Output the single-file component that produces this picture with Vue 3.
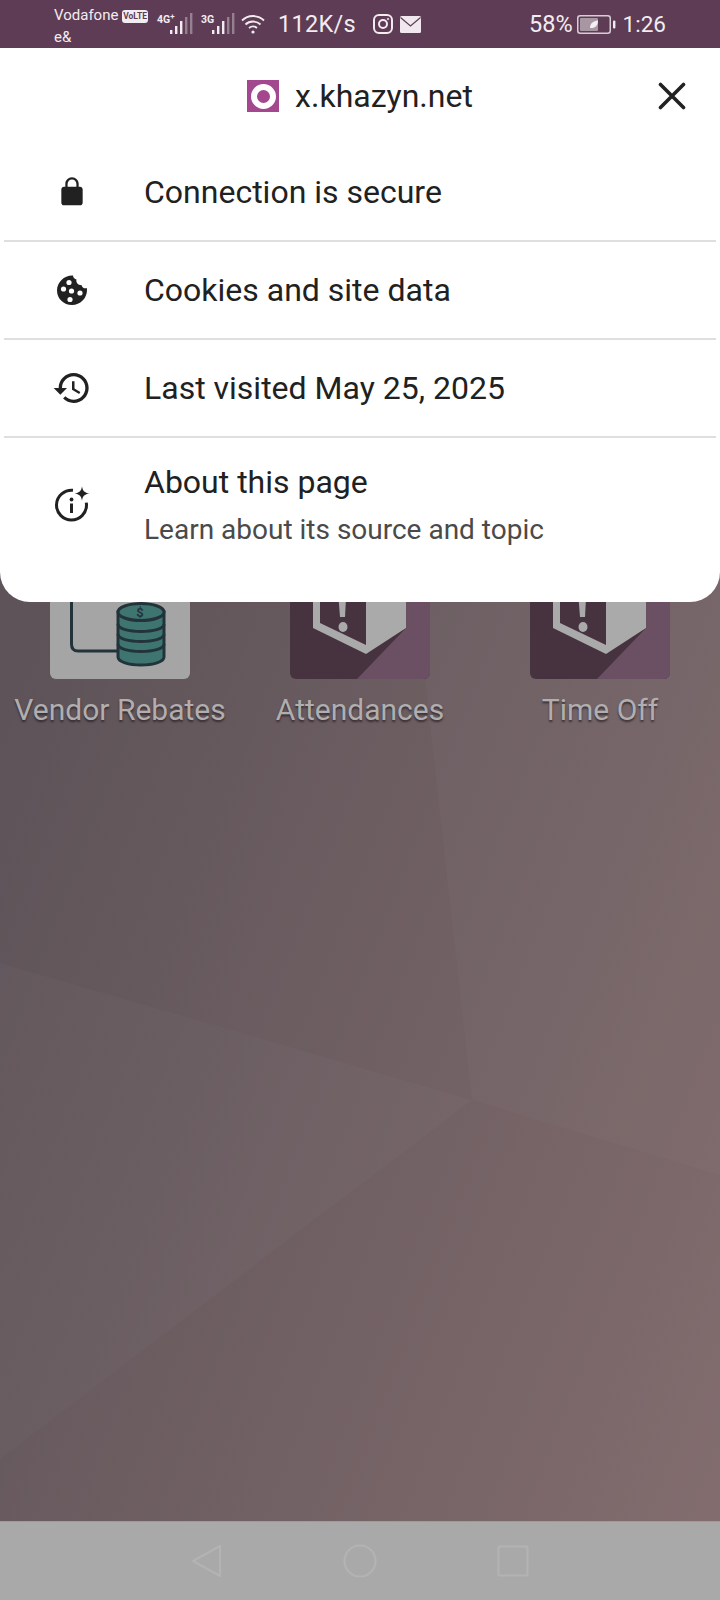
<template>
  <div class="phone">
    <!-- status bar -->
    <div class="status-bar">
      <div class="carrier">
        <div class="carrier-line">Vodafone <span class="volte">VoLTE</span></div>
        <div class="carrier-line">e&amp;</div>
      </div>
      <div class="net">
        <span class="net-label">4G<sup>+</sup></span>
        <svg class="bars" width="24" height="22" viewBox="0 0 24 22">
          <rect v-for="b in signalBars" :key="b.x" :x="b.x" :y="22 - b.h" width="2.4" :height="b.h" :fill="b.on ? '#f2ecf0' : '#94808f'" />
        </svg>
      </div>
      <div class="net net-3g">
        <span class="net-label">3G</span>
        <svg class="bars" width="24" height="22" viewBox="0 0 24 22">
          <rect v-for="b in signalBars" :key="b.x" :x="b.x" :y="22 - b.h" width="2.4" :height="b.h" :fill="b.on ? '#f2ecf0' : '#94808f'" />
        </svg>
      </div>
      <svg class="wifi" width="25" height="22" viewBox="0 0 25 22" fill="none" stroke="#f2ecf0" stroke-width="1.8">
        <path d="M1 7.500C7 1.500 17 1.500 23 7.500" />
        <path d="M4.500 11.500C8.500 7.500 15.500 7.500 19.500 11.500" />
        <path d="M8 15C10.500 13 13.500 13 16 15" />
        <circle cx="12" cy="19" r="1.600" fill="#f2ecf0" stroke="none" />
      </svg>
      <span class="speed">112K/s</span>
      <svg class="insta" width="20" height="20" viewBox="0 0 20 20" fill="none" stroke="#f2ecf0" stroke-width="2">
        <rect x="1" y="1" width="18" height="18" rx="5" />
        <circle cx="10" cy="10" r="4" />
        <circle cx="15" cy="5" r="0.800" fill="#f2ecf0" stroke-width="0.600" />
      </svg>
      <svg class="mail" width="21" height="17" viewBox="0 0 21 17">
        <rect width="21" height="17" rx="1.500" fill="#f0e8ee" />
        <path d="M0.500 1.500L10.500 10L20.500 1.500" fill="none" stroke="#5f3c55" stroke-width="1.200" />
      </svg>
      <div class="status-right">
        <span class="pct">58%</span>
        <svg class="battery" width="39" height="19" viewBox="0 0 39 19">
          <rect x="0.750" y="0.750" width="32.500" height="17.500" rx="2.500" fill="none" stroke="#d8ccd5" stroke-width="1.500" />
          <rect x="3" y="3" width="18" height="13" rx="1" fill="#a896a3" />
          <path d="M13 13C13 8.500 16 6 21 5.500C21 10.500 18 13.500 13 13Z" fill="#f4eff3" />
          <rect x="36" y="5.500" width="2.400" height="8" rx="1" fill="#f2ecf0" />
        </svg>
        <span class="clock">1:26</span>
      </div>
    </div>

    <!-- home screen behind the sheet -->
    <div class="home">
      <svg class="wallpaper" width="720" height="1473" viewBox="0 0 720 1473">
        <defs>
          <linearGradient id="wall" gradientUnits="userSpaceOnUse" x1="0" y1="672" x2="895" y2="1017">
            <stop offset="0" stop-color="#5d5358" />
            <stop offset="1" stop-color="#826c6e" />
          </linearGradient>
        </defs>
        <rect width="720" height="1473" fill="url(#wall)" />
        <path d="M410 500L472 1052L720 1127V500Z" fill="#fff" opacity="0.02" />
        <path d="M0 915L215 977L472 1052L0 1411Z" fill="#fff" opacity="0.018" />
      </svg>
      <div class="apps">
        <div v-for="app in apps" :key="app.name" class="app">
          <div class="tile" :class="app.kind">
            <svg v-if="app.kind === 'vendor'" width="140" height="140" viewBox="0 0 140 140">
              <path d="M21.500 40V105Q21.500 112 28 112H72" fill="none" stroke="#22343a" stroke-width="3" />
              <path d="M68 73V118C68 123 79 126 91 126C103 126 114 123 114 118V73Z" fill="#3f7570" stroke="#22343a" stroke-width="3" />
              <ellipse cx="91" cy="73" rx="23" ry="8.500" fill="#3f7570" stroke="#22343a" stroke-width="3" />
              <path d="M68 85C68 95 114 95 114 85" fill="none" stroke="#22343a" stroke-width="3" />
              <path d="M68 95C68 105 114 105 114 95" fill="none" stroke="#22343a" stroke-width="3" />
              <path d="M68 105C68 115 114 115 114 105" fill="none" stroke="#22343a" stroke-width="3" />
              <text x="90" y="78" text-anchor="middle" class="dollar">$</text>
            </svg>
            <svg v-else width="140" height="140" viewBox="0 0 140 140">
              <path d="M67 140H140V40H116V89Z" fill="#6a5062" />
              <path d="M23 40H116V89L76 115L23 89Z" fill="#aaaaaa" />
              <path d="M30 40H76V106L30 84Z" fill="#47333f" />
              <path d="M47 40H57L55 78H50Z" fill="#aaaaaa" />
              <ellipse cx="53" cy="88" rx="4.500" ry="5" fill="#aaaaaa" />
            </svg>
          </div>
          <span class="app-name">{{ app.name }}</span>
        </div>
      </div>
    </div>

    <div class="nav-bar">
      <svg width="32" height="34" viewBox="0 0 32 34" fill="none" stroke="#b3b3b3" stroke-width="2.200">
        <path d="M29 2V32L2 17Z" stroke-linejoin="round" />
      </svg>
      <svg width="34" height="34" viewBox="0 0 34 34" fill="none" stroke="#b3b3b3" stroke-width="2.200">
        <circle cx="17" cy="17" r="15.500" />
      </svg>
      <svg width="32" height="32" viewBox="0 0 32 32" fill="none" stroke="#b3b3b3" stroke-width="2.200">
        <rect x="1.500" y="1.500" width="29" height="29" rx="1" />
      </svg>
    </div>

    <!-- page info sheet -->
    <div class="sheet">
      <div class="sheet-head">
        <span class="favicon"><span class="favicon-ring"></span></span>
        <span class="site">x.khazyn.net</span>
        <svg class="close" width="28" height="28" viewBox="0 0 28 28" stroke="#222" stroke-width="3.600" stroke-linecap="round">
          <path d="M2.500 2.500L25.500 25.500M25.500 2.500L2.500 25.500" />
        </svg>
      </div>

      <div class="row">
        <span class="row-icon">
          <svg width="32" height="32" viewBox="0 0 24 24" fill="#212121">
            <path d="M18 8h-1V6c0-2.760-2.240-5-5-5S7 3.240 7 6v2H6c-1.100 0-2 .9-2 2v10c0 1.100.9 2 2 2h12c1.100 0 2-.9 2-2V10c0-1.100-.9-2-2-2zM8.700 6c0-1.820 1.480-3.300 3.300-3.300s3.300 1.480 3.300 3.300v2H8.700V6z" />
          </svg>
        </span>
        <span class="row-text">Connection is secure</span>
      </div>
      <div class="row">
        <span class="row-icon">
          <svg width="32" height="32" viewBox="0 0 32 32">
            <path d="M17 1.500C8.500 1 1 8 1 16.500C1 24.800 7.700 31 16 31C24.300 31 31 24.300 31 16C31 15.300 30.900 14.700 30.800 14C28.500 15 26 13.500 25.700 11.200C22.500 11.500 19.500 8.500 20.500 5.500C18.500 5 17 3.500 17 1.500Z" fill="#212121" />
            <circle cx="7.500" cy="15" r="2.600" fill="#fff" />
            <circle cx="13" cy="8.500" r="2.600" fill="#fff" />
            <circle cx="15.500" cy="17" r="2.600" fill="#fff" />
            <circle cx="24" cy="19" r="2.600" fill="#fff" />
            <circle cx="14" cy="25.500" r="2.600" fill="#fff" />
          </svg>
        </span>
        <span class="row-text">Cookies and site data</span>
      </div>
      <div class="row">
        <span class="row-icon">
          <svg width="40" height="40" viewBox="0 0 24 24" fill="#212121">
            <path d="M13 3c-4.970 0-9 4.030-9 9H1l4 4 4-4H6c0-3.870 3.130-7 7-7s7 3.130 7 7-3.130 7-7 7c-1.930 0-3.680-.79-4.940-2.060l-1.420 1.420C8.270 19.990 10.510 21 13 21c4.970 0 9-4.030 9-9s-4.030-9-9-9zm-1 5v5l4.280 2.540.72-1.210-3.500-2.080V8H12z" />
          </svg>
        </span>
        <span class="row-text">Last visited May 25, 2025</span>
      </div>
      <div class="row row-last">
        <span class="row-icon">
          <svg width="36" height="36" viewBox="0 0 36 36" fill="none">
            <path d="M19 4.300C10.800 3.600 2.500 9.800 2.500 19C2.500 27.300 9.200 34 17.500 34C25.800 34 32.500 27.300 32.500 19C32.500 18 32.400 17.400 32.300 16.600" stroke="#212121" stroke-width="3" />
            <path d="M28 0.500C28.800 5 30.500 6.700 35.500 7.500C30.500 8.300 28.800 10 28 14.500C27.200 10 25.500 8.300 20.500 7.500C25.500 6.700 27.200 5 28 0.500Z" fill="#212121" />
            <rect x="16" y="17.500" width="3" height="9.500" fill="#212121" />
            <circle cx="17.500" cy="13.500" r="1.900" fill="#212121" />
          </svg>
        </span>
        <div class="row-stack">
          <span class="row-text">About this page</span>
          <span class="row-sub">Learn about its source and topic</span>
        </div>
      </div>
    </div>
  </div>
</template>

<script setup>
const signalBars = [
  { x: 0, h: 4, on: true },
  { x: 5, h: 8, on: true },
  { x: 10, h: 13, on: true },
  { x: 15, h: 17, on: false },
  { x: 20, h: 21, on: false },
]

const apps = [
  { name: 'Vendor Rebates', kind: 'vendor' },
  { name: 'Attendances', kind: 'shield' },
  { name: 'Time Off', kind: 'shield' },
]
</script>

<style scoped>
.phone {
  position: relative;
  width: 720px;
  height: 1600px;
  display: flex;
  flex-direction: column;
  overflow: hidden;
  font-family: Roboto, "Noto Sans", sans-serif;
}

.status-bar {
  height: 48px;
  flex-shrink: 0;
  display: flex;
  align-items: center;
  padding-left: 54px;
  padding-right: 54px;
  background: #5f3c55;
  color: #f2ecf0;
  box-sizing: border-box;
}

.carrier {
  width: 103px;
  flex-shrink: 0;
  font-size: 15px;
  line-height: 22px;
  margin-top: 3px;
  white-space: nowrap;
}

.volte {
  display: inline-block;
  background: #f2ecf0;
  color: #5f3c55;
  font-size: 8.500px;
  font-weight: 700;
  line-height: 13px;
  height: 13px;
  width: 26px;
  text-align: center;
  border-radius: 3px;
  vertical-align: 1px;
}

.net {
  display: flex;
  align-items: flex-start;
  width: 37px;
  height: 24px;
  flex-shrink: 0;
}

.net-3g {
  margin-left: 7px;
  width: 35px;
}

.net-label {
  width: 13px;
  flex-shrink: 0;
  font-size: 10.500px;
  font-weight: 700;
  line-height: 12px;
  margin-top: 2px;
  white-space: nowrap;
}

.net-3g .net-label {
  width: 11px;
}

.net-label sup {
  font-size: 8px;
  line-height: 0;
}

.bars {
  flex-shrink: 0;
}

.wifi {
  margin-left: 5px;
  flex-shrink: 0;
}

.speed {
  font-size: 23.500px;
  margin-left: 12px;
  letter-spacing: 0.300px;
}

.insta {
  margin-left: 17px;
  flex-shrink: 0;
}

.mail {
  margin-left: 7px;
  flex-shrink: 0;
}

.status-right {
  margin-left: auto;
  display: flex;
  align-items: center;
  gap: 7px;
  font-size: 23.500px;
}

.pct {
  margin-right: -3px;
}

.battery {
  flex-shrink: 0;
}

.clock {
  font-size: 22.500px;
}

.home {
  position: relative;
  flex: 1;
  min-height: 0;
}

.wallpaper {
  position: absolute;
  left: 0;
  top: 0;
}

.apps {
  position: relative;
  display: flex;
  gap: 100px;
  padding: 491px 0 0 50px;
}

.app {
  width: 140px;
  display: flex;
  flex-direction: column;
  align-items: center;
}

.tile {
  width: 140px;
  height: 140px;
  border-radius: 6px;
  overflow: hidden;
}

.tile svg {
  display: block;
}

.tile.vendor {
  background: #a6a5a6;
}

.tile.shield {
  background: #47333f;
}

.dollar {
  font-family: Roboto, sans-serif;
  font-size: 13px;
  font-weight: 700;
  fill: #22343a;
}

.app-name {
  margin-top: 13px;
  font-size: 30px;
  line-height: 36px;
  color: #b0aeaf;
  white-space: nowrap;
  text-shadow: 0 2px 2px rgba(40, 30, 35, 0.75);
}

.nav-bar {
  height: 79px;
  flex-shrink: 0;
  display: flex;
  align-items: center;
  justify-content: center;
  gap: 120px;
  box-sizing: border-box;
  background: #a9a9a9;
  border-top: 1px solid #a09a9c;
}

.sheet {
  position: absolute;
  left: 0;
  top: 48px;
  width: 720px;
  height: 554px;
  box-sizing: border-box;
  background: #fff;
  border-radius: 0 0 30px 30px;
  color: #212121;
  padding: 0 4px;
}

.sheet-head {
  position: relative;
  height: 96px;
  display: flex;
  align-items: center;
  justify-content: center;
  gap: 16px;
}

.favicon {
  width: 32px;
  height: 32px;
  display: flex;
  align-items: center;
  justify-content: center;
  background: #a3478f;
}

.favicon-ring {
  width: 13px;
  height: 13px;
  border: 6px solid #fff;
  border-radius: 50%;
}

.site {
  font-size: 32px;
}

.close {
  position: absolute;
  right: 30px;
  top: 34px;
}

.row {
  height: 98px;
  display: flex;
  align-items: center;
  border-bottom: 2px solid #dfdfdf;
  box-sizing: border-box;
}

.row-last {
  border-bottom: 0;
  height: 132px;
}

.row-icon {
  width: 135px;
  margin-right: 5px;
  flex-shrink: 0;
  display: flex;
  justify-content: center;
}

.row-icon svg {
  display: block;
}

.row-text {
  font-size: 32px;
  line-height: 40px;
}

.row > .row-text {
  margin-bottom: 1px;
}

.row-stack {
  display: flex;
  flex-direction: column;
  gap: 11px;
}

.row-sub {
  font-size: 28px;
  line-height: 34px;
  color: #4a4a4a;
}
</style>

<style>
html,
body {
  margin: 0;
  background: #5f5258;
}
</style>
